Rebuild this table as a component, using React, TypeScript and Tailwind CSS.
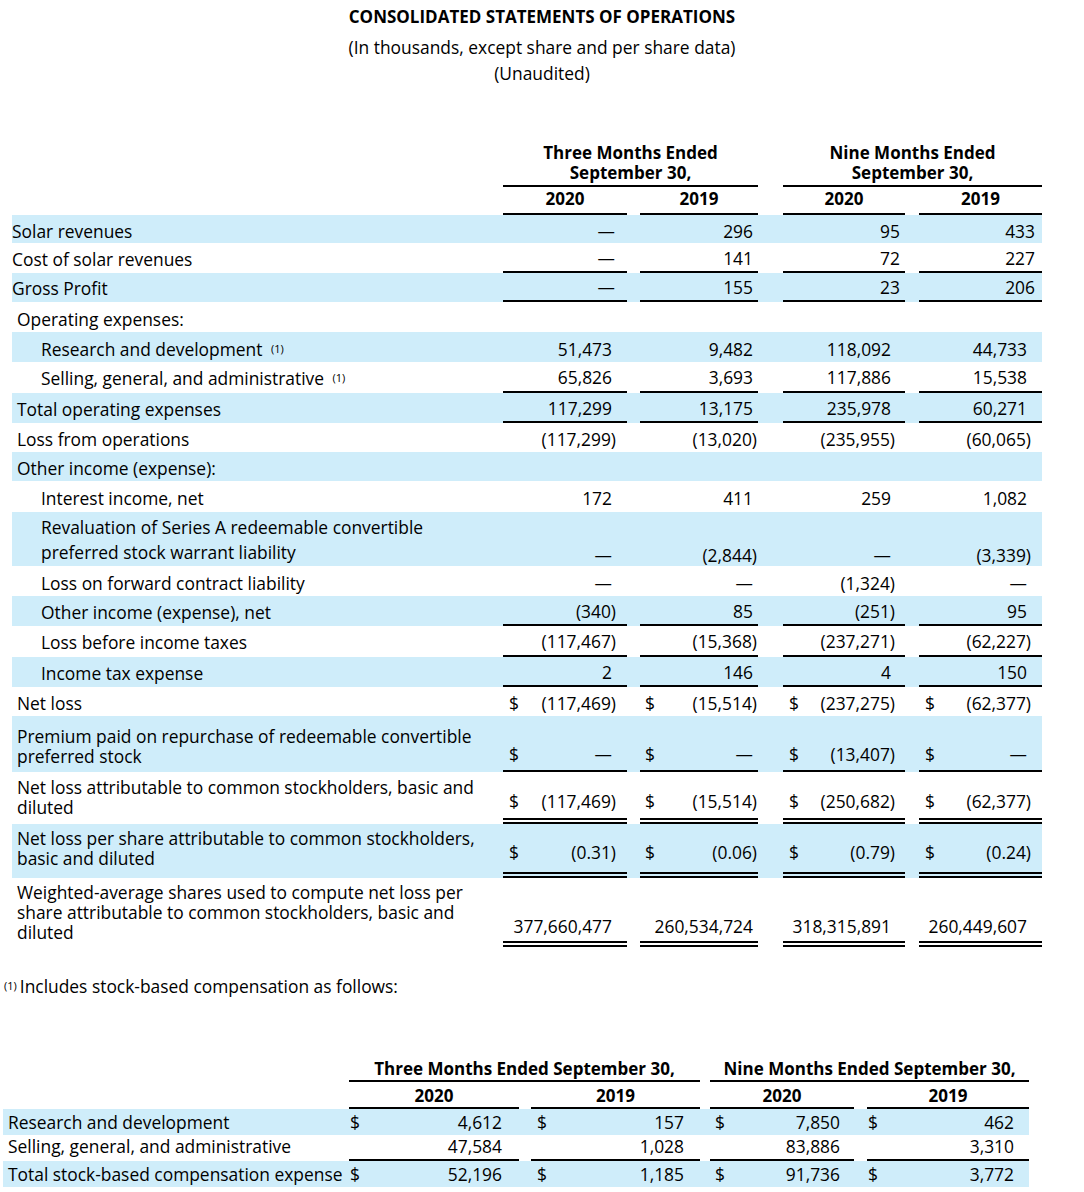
import React from 'react';

// Consolidated statements of operations, rendered as a plain financial table

type Border = 'none' | 'single' | 'double';

interface RowProps {
    label: React.ReactNode;
    values: string[];
    dollars?: boolean[];
    band?: boolean;
    border?: Border;
    indent?: 0 | 1 | 2;
    top?: boolean;
    h: string;
    pb?: string;
    multi?: boolean;
}

const Sup = () => <sup className="ml-1 text-[11px] relative -top-[3px]">(1)</sup>;

const COLS = ['w-[124px]', 'ml-[13px] w-[118px]', 'ml-[25px] w-[122px]', 'ml-[14px] w-[123px]'];
const PR_MAIN = ['pr-[15px]', 'pr-[5px]', 'pr-[14px]', 'pr-[15px]'];
const PR_TOP = ['pr-[12px]', 'pr-[5px]', 'pr-[5px]', 'pr-[7px]'];
const PL = ['pl-[6px]', 'pl-[5px]', 'pl-[6px]', 'pl-[6px]'];

const borderClass = (b: Border) =>
    b === 'single' ? 'border-b-2 border-black' : b === 'double' ? 'border-b-[6px] border-double border-black' : '';

const Value = ({ v }: { v: string }) => (
    <span className={v.endsWith(')') ? '-mr-[4px]' : ''}>{v}</span>
);

const Row: React.FC<RowProps> = ({ label, values, dollars, band, border = 'none', indent = 1, top, h, pb = 'pb-0', multi }) => {
    const pr = top ? PR_TOP : PR_MAIN;
    const ind = indent === 0 ? 'pl-0' : indent === 1 ? 'pl-[5px]' : 'pl-[29px]';
    const align = multi ? `items-end ${pb}` : `items-center ${border === 'none' ? 'pt-[3px]' : 'pt-[1px]'}`;
    return (
        <div className={`flex w-[1030px] ${h} ${band ? 'bg-[#cfedfa]' : ''}`}>
            <div className={`w-[491px] flex ${align} ${ind} leading-[20px] whitespace-nowrap`}>
                <div>{label}</div>
            </div>
            {values.map((v, i) => (
                <div
                    key={i}
                    className={`${COLS[i]} flex justify-between ${align} ${PL[i]} ${pr[i]} ${borderClass(border)} leading-[20px]`}
                >
                    <span>{dollars && dollars[i] ? '$' : ''}</span>
                    <Value v={v} />
                </div>
            ))}
        </div>
    );
};

const D = [true, true, true, true];

const S2W = ['w-[170px]', 'ml-[12px] w-[169px]', 'ml-[10px] w-[144px]', 'ml-[13px] w-[162px]'];
const S2P = ['pl-[1px] pr-[17px]', 'pl-[6px] pr-[16px]', 'pl-[5px] pr-[14px]', 'pl-[1px] pr-[15px]'];

const CompRow = ({ label, values, dollars, band, border }: { label: string; values: string[]; dollars: boolean; band?: boolean; border?: boolean }) => (
    <div className={`flex w-[1026px] h-[26px] ${band ? 'bg-[#cfedfa]' : ''}`}>
        <div className={`w-[346px] pl-[5px] flex items-center whitespace-nowrap ${border ? 'pb-[4px]' : ''}`}>{label}</div>
        {values.map((v, i) => (
            <div key={i} className={`${S2W[i]} ${S2P[i]} flex items-center justify-between ${border ? 'border-b-2 border-black pb-[2px]' : ''}`}>
                <span>{dollars ? '$' : ''}</span>
                <span>{v}</span>
            </div>
        ))}
    </div>
);

export default function App() {
    return (
        <div className="w-[1084px] h-[1192px] bg-white text-black text-[17.4px] overflow-hidden" style={{ fontFamily: '"Open Sans", Lato, sans-serif' }}>
            {/* title */}
            <div className="pt-[4px] text-center leading-[26px]">
                <div className="font-bold text-[17px]">CONSOLIDATED STATEMENTS OF OPERATIONS</div>
                <div className="mt-[4px]">(In thousands, except share and per share data)</div>
                <div>(Unaudited)</div>
            </div>

            <div className="pl-[12px] mt-[57px]">
                {/* column headers */}
                <div className="flex font-bold text-[17px] leading-[20px] text-center">
                    <div className="w-[491px]" />
                    <div className="w-[255px] border-b-2 border-black pb-[2px]">
                        <div>Three Months Ended</div>
                        <div>September 30,</div>
                    </div>
                    <div className="ml-[25px] w-[259px] border-b-2 border-black pb-[2px]">
                        <div>Nine Months Ended</div>
                        <div>September 30,</div>
                    </div>
                </div>
                <div className="flex font-bold text-[17px] h-[28px]">
                    <div className="w-[491px]" />
                    {['2020', '2019', '2020', '2019'].map((y, i) => (
                        <div key={i} className={`${COLS[i]} text-center border-b-2 border-black leading-[24px]`}>{y}</div>
                    ))}
                </div>

                <Row label="Solar revenues" indent={0} band top h="h-[28px]" values={['—', '296', '95', '433']} />
                <Row label="Cost of solar revenues" indent={0} top border="single" h="h-[30px]" values={['—', '141', '72', '227']} />
                <Row label="Gross Profit" indent={0} band top border="single" h="h-[29px]" values={['—', '155', '23', '206']} />
                <Row label="Operating expenses:" h="h-[30px]" values={['', '', '', '']} />
                <Row label={<>Research and development <Sup /></>} indent={2} band h="h-[30px]" values={['51,473', '9,482', '118,092', '44,733']} />
                <Row label={<>Selling, general, and administrative <Sup /></>} indent={2} border="single" h="h-[31px]" values={['65,826', '3,693', '117,886', '15,538']} />
                <Row label="Total operating expenses" band border="single" h="h-[30px]" values={['117,299', '13,175', '235,978', '60,271']} />
                <Row label="Loss from operations" h="h-[29px]" values={['(117,299)', '(13,020)', '(235,955)', '(60,065)']} />
                <Row label="Other income (expense):" band h="h-[29px]" values={['', '', '', '']} />
                <Row label="Interest income, net" indent={2} h="h-[31px]" values={['172', '411', '259', '1,082']} />
                <Row
                    label={<div className="leading-[25px]">Revaluation of Series A redeemable convertible<br />preferred stock warrant liability</div>}
                    indent={2}
                    band
                    multi
                    pb="pb-[1px]"
                    h="h-[54px]"
                    values={['—', '(2,844)', '—', '(3,339)']}
                />
                <Row label="Loss on forward contract liability" indent={2} h="h-[30px]" values={['—', '—', '(1,324)', '—']} />
                <Row label="Other income (expense), net" indent={2} band border="single" h="h-[30px]" values={['(340)', '85', '(251)', '95']} />
                <Row label="Loss before income taxes" indent={2} border="single" h="h-[31px]" values={['(117,467)', '(15,368)', '(237,271)', '(62,227)']} />
                <Row label="Income tax expense" indent={2} band border="single" h="h-[30px]" values={['2', '146', '4', '150']} />
                <Row label="Net loss" dollars={D} h="h-[29px]" values={['(117,469)', '(15,514)', '(237,275)', '(62,377)']} />
                <Row
                    label={<>Premium paid on repurchase of redeemable convertible<br />preferred stock</>}
                    band
                    multi
                    pb="pb-[6px]"
                    border="single"
                    dollars={D}
                    h="h-[56px]"
                    values={['—', '—', '(13,407)', '—']}
                />
                <Row
                    label={<>Net loss attributable to common stockholders, basic and<br />diluted</>}
                    multi
                    pb="pb-[7px]"
                    border="double"
                    dollars={D}
                    h="h-[52px]"
                    values={['(117,469)', '(15,514)', '(250,682)', '(62,377)']}
                />
                <Row
                    label={<>Net loss per share attributable to common stockholders,<br />basic and diluted</>}
                    band
                    multi
                    pb="pb-[10px]"
                    border="double"
                    dollars={D}
                    h="h-[54px]"
                    values={['(0.31)', '(0.06)', '(0.79)', '(0.24)']}
                />
                <Row
                    label={<>Weighted-average shares used to compute net loss per<br />share attributable to common stockholders, basic and<br />diluted</>}
                    multi
                    pb="pb-[5px]"
                    border="double"
                    h="h-[69px]"
                    values={['377,660,477', '260,534,724', '318,315,891', '260,449,607']}
                />
            </div>

            {/* footnote */}
            <div className="mt-[28px] pl-[4px] leading-[22px]">
                <sup className="text-[11px] relative -top-[3px] mr-[3px]">(1)</sup>Includes stock-based compensation as follows:
            </div>

            {/* stock-based compensation table */}
            <div className="pl-[3px] mt-[61px]">
                <div className="flex font-bold text-[17px] leading-[22px] text-center">
                    <div className="w-[346px]" />
                    <div className="w-[351px] border-b-2 border-black">Three Months Ended September 30,</div>
                    <div className="ml-[10px] w-[319px] border-b-2 border-black">Nine Months Ended September 30,</div>
                </div>
                <div className="flex font-bold text-[17px] h-[27px]">
                    <div className="w-[346px]" />
                    {['2020', '2019', '2020', '2019'].map((y, i) => (
                        <div key={i} className={`${S2W[i]} text-center border-b-2 border-black leading-[27px]`}>{y}</div>
                    ))}
                </div>
                <CompRow label="Research and development" dollars band values={['4,612', '157', '7,850', '462']} />
                <CompRow label="Selling, general, and administrative" dollars={false} border values={['47,584', '1,028', '83,886', '3,310']} />
                <CompRow label="Total stock-based compensation expense" dollars band values={['52,196', '1,185', '91,736', '3,772']} />
            </div>
        </div>
    );
}
